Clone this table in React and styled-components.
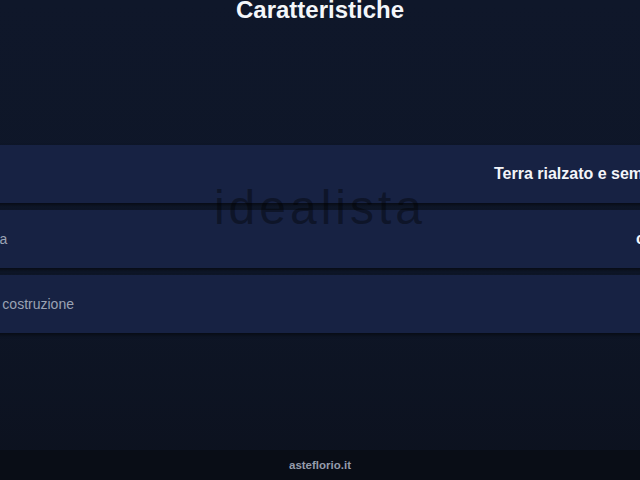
import React from "react";
import styled, { createGlobalStyle } from "styled-components";

const GlobalStyle = createGlobalStyle`
  html, body {
    margin: 0;
    padding: 0;
    background: #0b101c;
    overflow: hidden;
  }
  body {
    font-family: "Liberation Sans", Arial, sans-serif;
  }
`;

const Page = styled.div`
  width: 640px;
  height: 480px;
  display: flex;
  flex-direction: column;
  background: linear-gradient(180deg, #0f172a 0%, #0e1627 60%, #0c111e 100%);
  overflow: hidden;
`;

const Main = styled.main`
  position: relative;
  flex: 1;
  display: flex;
  flex-direction: column;
`;

const Title = styled.h1`
  margin: 0 0 125px;
  font-size: 24px;
  line-height: 20px;
  font-weight: 700;
  color: #f4f6fa;
  text-align: center;
`;

const List = styled.div`
  width: 790px;
  margin-left: -65px;
  display: flex;
  flex-direction: column;
  gap: 7px;
`;

const Row = styled.div`
  height: 58px;
  box-sizing: border-box;
  padding: 0 17px 0 16px;
  display: flex;
  align-items: center;
  justify-content: space-between;
  background: #172243;
  box-shadow: 0 2px 3px rgba(0, 0, 0, 0.45);
  line-height: 16px;
`;

const Label = styled.span`
  color: #9ba3b3;
  font-size: 14px;
`;

const Value = styled.span`
  color: #f3f5f9;
  font-size: 16px;
  font-weight: 700;
`;

const Watermark = styled.div`
  position: absolute;
  left: 0;
  right: 0;
  top: 184px;
  text-align: center;
  font-size: 48px;
  line-height: 48px;
  letter-spacing: 4px;
  color: rgba(0, 0, 0, 0.4);
  pointer-events: none;
`;

const Footer = styled.footer`
  height: 30px;
  display: flex;
  align-items: center;
  justify-content: center;
  background: #090d16;
  color: #959cab;
  font-size: 11.5px;
  font-weight: 700;
`;

const rows = [
  { label: "Piano", value: "Terra rialzato e seminterrato" },
  { label: "Tipologia", value: "cascinale" },
  { label: "Anno di costruzione", value: "1960" },
];

const App = () => {
  return (
    <>
      <GlobalStyle />
      <Page>
        <Main>
          <Title>Caratteristiche</Title>
          <List>
            {rows.map((r) => (
              <Row key={r.label}>
                <Label>{r.label}</Label>
                <Value>{r.value}</Value>
              </Row>
            ))}
          </List>
          <Watermark>idealista</Watermark>
        </Main>
        <Footer>asteflorio.it</Footer>
      </Page>
    </>
  );
};

export default App;
